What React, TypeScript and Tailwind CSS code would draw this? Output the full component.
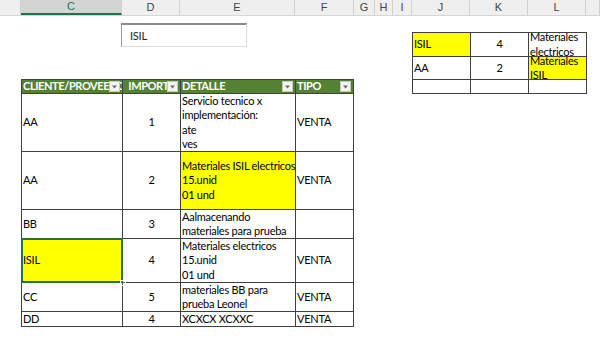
import React from "react";

const colHeads = [
  { l: "", w: "w-[21px]" },
  { l: "C", w: "w-[101px]", sel: true },
  { l: "D", w: "w-[58px]" },
  { l: "E", w: "w-[115px]" },
  { l: "F", w: "w-[59px]" },
  { l: "G", w: "w-[21px]" },
  { l: "H", w: "w-[18px]" },
  { l: "I", w: "w-[19px]" },
  { l: "J", w: "w-[58px]" },
  { l: "K", w: "w-[58px]" },
  { l: "L", w: "w-[58px]" },
  { l: "", w: "flex-1" },
];

function Filter() {
  return (
    <span className="absolute right-[2px] top-[1px] w-[11px] h-[11px] bg-[#f4f4f4] border border-[#c4c4c4] flex items-center justify-center">
      <svg width="7" height="4" viewBox="0 0 7 4">
        <path d="M1 0.5 L6 0.5 L3.5 3.5 Z" fill="#6a6a6a" />
      </svg>
    </span>
  );
}

function Head({ children, center }: { children: React.ReactNode; center?: boolean }) {
  return (
    <div className={"relative bg-[#548235] text-white font-bold overflow-hidden whitespace-nowrap flex items-center px-[1px] tracking-[-0.4px] " + (center ? "justify-center" : "")}>
      {children}
      <Filter />
    </div>
  );
}

function Cell({ children, yellow, center, sel }: { children?: React.ReactNode; yellow?: boolean; center?: boolean; sel?: boolean }) {
  return (
    <div className={"relative flex flex-col justify-center px-[1px] whitespace-nowrap " + (yellow ? "bg-[#ffff00] " : "bg-white ") + (center ? "items-center" : "items-start")}>
      {children}
      {sel && (
        <>
          <div className="absolute -inset-[1px] border-2 border-[#217346]" />
          <div className="absolute -right-[4px] -bottom-[4px] w-[6px] h-[6px] bg-[#217346] border border-white" />
        </>
      )}
    </div>
  );
}

export default function App() {
  return (
    <div className="w-[600px] h-[339px] bg-white overflow-hidden flex flex-col text-[11px] text-black" style={{ fontFamily: "Lato, 'Liberation Sans', sans-serif" }}>
      {/* column letters */}
      <div className="flex h-[16px] bg-[#efefef] border-b border-[#d6d6d6] text-[#444] text-[11px]" style={{ fontFamily: "'Liberation Sans', sans-serif" }}>
        {colHeads.map((c, i) => (
          <div
            key={i}
            className={
              c.w +
              " flex items-center justify-center border-r border-[#d0d0d0] " +
              (c.sel ? "bg-[#d4d4d4] text-[#217346] border-b-2 border-b-[#217346]" : "")
            }
          >
            {c.l}
          </div>
        ))}
      </div>

      <div className="flex items-start leading-[14.25px] tracking-[-0.25px]">
        {/* left block */}
        <div className="ml-[21px] w-[333px] flex flex-col">
          <div className="mt-[7px] ml-[100px] w-[126px] h-[24px] border-t-2 border-l border-t-[#8a8a8a] border-l-[#9a9a9a] border-r border-b border-r-[#dcdcdc] border-b-[#dcdcdc] pl-[8px] pt-[4px] text-[#222]">
            ISIL
          </div>

          <div className="mt-[32px] grid grid-cols-[100px_57px_114px_57px] grid-rows-[13px_57px_57px_28px_43px_28px_14px] gap-px bg-[#404040] p-px">
            <Head>CLIENTE/PROVEEDOR</Head>
            <Head center>IMPORTE</Head>
            <Head>DETALLE</Head>
            <Head>TIPO</Head>

            <Cell>AA</Cell>
            <Cell center>1</Cell>
            <Cell>
              <span>Servicio tecnico x</span>
              <span>implementación:</span>
              <span>ate</span>
              <span>ves</span>
            </Cell>
            <Cell>VENTA</Cell>

            <Cell>AA</Cell>
            <Cell center>2</Cell>
            <Cell yellow>
              <span>Materiales ISIL electricos</span>
              <span>15.unid</span>
              <span>01 und</span>
            </Cell>
            <Cell>VENTA</Cell>

            <Cell>BB</Cell>
            <Cell center>3</Cell>
            <Cell>
              <span>Aalmacenando</span>
              <span>materiales para prueba</span>
            </Cell>
            <Cell />

            <Cell yellow sel>ISIL</Cell>
            <Cell center>4</Cell>
            <Cell>
              <span>Materiales electricos</span>
              <span>15.unid</span>
              <span>01 und</span>
            </Cell>
            <Cell>VENTA</Cell>

            <Cell>CC</Cell>
            <Cell center>5</Cell>
            <Cell>
              <span>materiales BB para</span>
              <span>prueba Leonel</span>
            </Cell>
            <Cell>VENTA</Cell>

            <Cell>DD</Cell>
            <Cell center>4</Cell>
            <Cell>XCXCX XCXXC</Cell>
            <Cell>VENTA</Cell>
          </div>
        </div>

        {/* right block */}
        <div className="ml-[58px] mt-[16px] grid grid-cols-[57px_57px_57px] grid-rows-[23px_22px_13px] gap-px bg-[#404040] p-px">
          <Cell yellow>ISIL</Cell>
          <Cell center>4</Cell>
          <div className="bg-white overflow-hidden flex flex-col justify-center px-[1px] whitespace-nowrap">
            <span>Materiales</span>
            <span>electricos</span>
          </div>

          <Cell>AA</Cell>
          <Cell center>2</Cell>
          <div className="bg-[#ffff00] overflow-hidden flex flex-col justify-center px-[1px] whitespace-nowrap">
            <span>Materiales</span>
            <span>ISIL</span>
          </div>

          <Cell />
          <Cell />
          <Cell />
        </div>
      </div>
    </div>
  );
}
